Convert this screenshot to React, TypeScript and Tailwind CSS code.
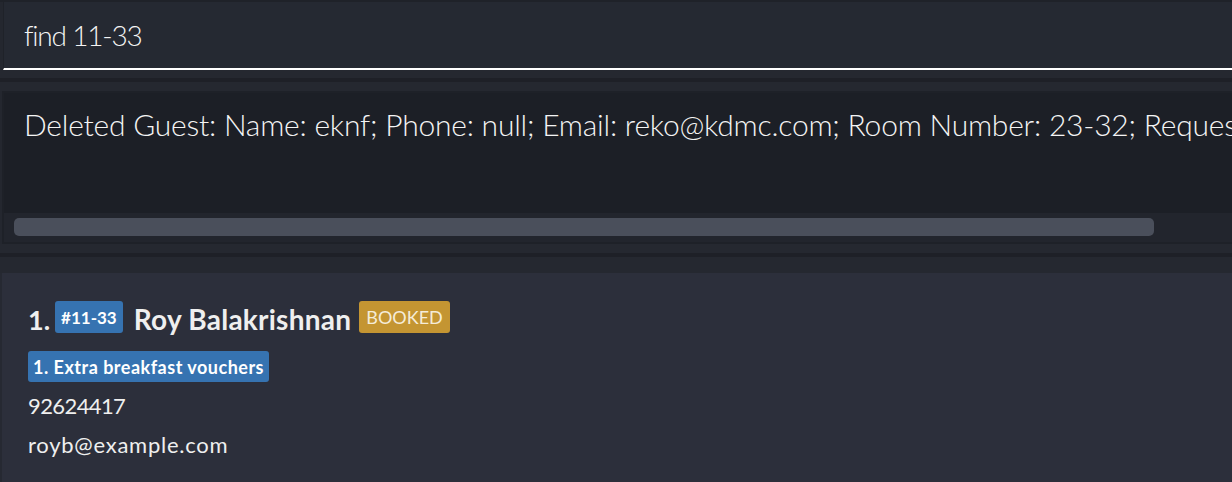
import React from 'react'

const font = { fontFamily: 'Lato, "Open Sans", sans-serif' }

const Tag: React.FC<{ text: string, className?: string }> = ({ text, className }) => (
  <span className={`inline-flex items-center rounded-[3px] leading-none ${className || ''}`}>{text}</span>
)

const App: React.FC = () => {
  return (
    <div className="w-[1232px] h-[482px] overflow-hidden bg-[#24272f] flex flex-col text-white" style={font}>
      {/* command box */}
      <div className="border-t-2 border-[#1f2229] pl-[3px]">
        <div className="h-[68px] bg-[#252932] border-l border-[#1f2229] border-b-2 border-b-white pl-[20px] pt-[18px]">
          <div className="text-[28px] leading-[30px] font-light tracking-[-1.2px] text-[#f4f4f4]">find 11-33</div>
        </div>
      </div>
      <div className="h-[8px] bg-[#252830]" />
      <div className="h-[4px] bg-[#1e2027]" />
      <div className="h-[9px] bg-[#252830]" />

      {/* result display */}
      <div className="pl-[2px]">
        <div className="h-[153px] border-2 border-r-0 border-[#1e2128] bg-[#1c1f26] flex flex-col">
          <div className="h-[120px] pl-[20px] pt-[16px] overflow-hidden">
            <div className="text-[30px] leading-[30px] font-light tracking-[-0.22px] text-[#f4f4f4] whitespace-nowrap">
              Deleted Guest: Name: eknf; Phone: null; Email: reko@kdmc.com; Room Number: 23-32; Request: none
            </div>
          </div>
          <div className="flex-1 bg-[#22252d] pl-[10px] pt-[5px]">
            <div className="w-[1140px] h-[18px] rounded-[5px] bg-[#4a4f5b]" />
          </div>
        </div>
      </div>

      <div className="h-[9px] bg-[#252830]" />
      <div className="h-[4px] bg-[#1e2027]" />
      <div className="h-[16px] bg-[#252830]" />

      {/* guest list */}
      <div className="flex-1 pl-[2px] bg-[#262932]">
        <div className="h-full bg-[#2c2f3b] pl-[26px] pt-[28px] flex flex-col">
          <div className="flex items-start h-[32px]">
            <span className="text-[27px] leading-[37px] font-bold text-[#efefef] mr-[5px]">1.</span>
            <Tag text="#11-33" className="h-[32px] px-[6px] bg-[#3673b1] text-[17px] font-bold text-white mr-[11px]" />
            <span className="text-[28px] leading-[37px] font-bold tracking-[0.25px] text-[#efefef] mr-[8px]">Roy Balakrishnan</span>
            <Tag text="BOOKED" className="h-[32px] px-[7px] bg-[#c49532] text-[18px] text-[#f5ecd8]" />
          </div>
          <div className="mt-[18px] flex">
            <Tag text="1. Extra breakfast vouchers" className="h-[31px] px-[5px] bg-[#3673b1] text-[18px] tracking-[0.5px] font-bold text-white" />
          </div>
          <div className="mt-[10px] text-[22px] leading-[28px] tracking-[-0.6px] text-[#efefef]">92624417</div>
          <div className="mt-[11px] text-[22px] leading-[28px] tracking-[0.75px] text-[#efefef]">royb@example.com</div>
        </div>
      </div>
    </div>
  )
}

export default App
